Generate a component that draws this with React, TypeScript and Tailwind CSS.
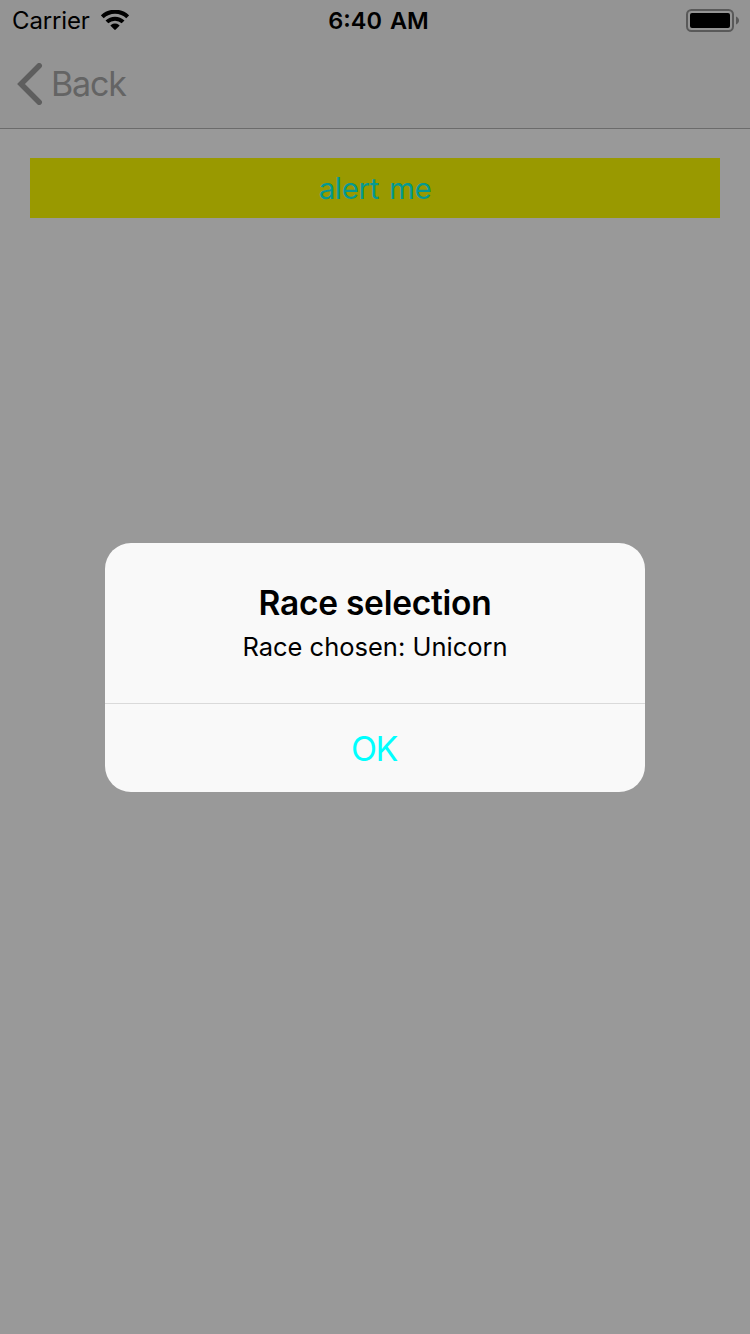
export default function App() {
  return (
    <div className="relative h-[1334px] w-[750px] overflow-hidden bg-[#999999] font-['Inter',sans-serif] text-black">
      <header className="h-[129px] border-b border-[#6b6b6b] bg-[#949494]">
        <div className="grid h-10 grid-cols-[1fr_auto_1fr] items-center pl-3 pr-[11px]">
          <div className="flex items-center gap-[11px]">
            <span className="pt-0.5 text-[24px] leading-[38px] tracking-[-0.15px]">Carrier</span>
            <svg width="28" height="20" viewBox="0 0 28 20" fill="none" stroke="black" strokeWidth="4">
              <path d="M1.300 6.800a18.200 18.200 0 0 1 25.400 0" />
              <path d="M5.900 11.900a11.700 11.700 0 0 1 16.200 0" />
              <path d="M13.300 19.600l-3.500-3.500q-.6-.6 .1-1.100a7 7 0 0 1 8.200 0q.7.5.1 1.100l-3.500 3.500q-.7.600-1.400 0z" fill="black" stroke="none" />
            </svg>
          </div>
          <span className="pl-1.5 pt-0.5 text-[23.5px] font-semibold leading-[38px] [word-spacing:2px]">6:40 AM</span>
          <svg className="justify-self-end" width="53" height="24" viewBox="0 -1 53 24">
            <rect x="1" y="1" width="46" height="21" rx="4.5" fill="none" stroke="#595959" strokeWidth="2" />
            <rect x="4" y="4" width="40" height="15" rx="2" fill="black" />
            <path d="M50 7.500c4 1.500 4 6.500 0 8z" fill="#595959" />
          </svg>
        </div>
        <div className="flex h-[88px] items-center gap-[8px] pl-[17px] text-[#5e5e5e]">
          <svg width="26" height="42" viewBox="0 0 26 42" fill="none" stroke="currentColor" strokeWidth="5.5" strokeLinecap="round">
            <path d="M22.200 2.800L4 21L22.200 39.200" />
          </svg>
          <span className="pb-px text-[34px] tracking-[-1.2px] text-[#646464]">Back</span>
        </div>
      </header>
      <main className="px-[30px] pt-[29px]">
        <button className="block h-[60px] w-full bg-[#999900] pt-px text-[29.5px] tracking-[-0.35px] text-[#059991] [word-spacing:2px]">alert me</button>
      </main>
      <div role="dialog" className="absolute left-[105px] top-[543px] flex h-[249px] w-[540px] flex-col overflow-hidden rounded-[26px] bg-[#f9f9f9] text-center">
        <div className="h-[160px] pt-[38px]">
          <h1 className="text-[33.500px] font-semibold leading-[44px] tracking-[-0.25px]">Race selection</h1>
          <p className="pt-px text-[25.500px] leading-[42px]">Race chosen: Unicorn</p>
        </div>
        <button className="flex-1 border-t border-[#dadada] pr-0.5 text-[34px] tracking-[-1.5px] text-[#00ffff]">OK</button>
      </div>
    </div>
  );
}
